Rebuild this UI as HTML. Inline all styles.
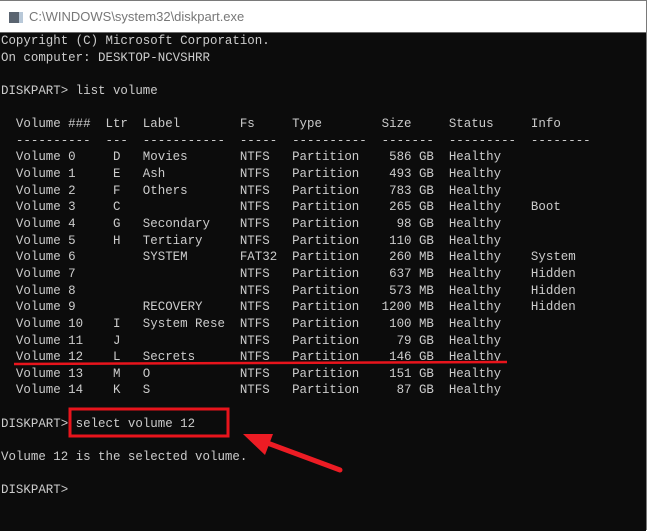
<!DOCTYPE html>
<html><head><meta charset="utf-8"><style>
html,body{margin:0;padding:0;}
body{width:648px;height:530px;position:relative;overflow:hidden;background:#fff;}
.win{position:absolute;left:0;top:0;width:647px;height:530px;border-top:1px solid #7a7a7a;border-right:1px solid #7a7a7a;box-sizing:border-box;}
.title{position:absolute;left:0;top:1px;width:646px;height:30px;background:#fff;border-bottom:1px solid #6a6a6a;}
.title span{position:absolute;left:29px;top:7px;font:13px "Liberation Sans",sans-serif;color:#777;}
.ico{position:absolute;left:9px;top:10px;width:14px;height:11px;background:#5a6470;}
.ico:after{content:"";position:absolute;right:0;top:0;width:4px;height:11px;background:#b8c8d8;}
.con{position:absolute;left:0;top:32px;width:646px;height:498px;background:#0c0c0c;}
pre{position:absolute;left:1px;top:0;margin:0;font:12.45px/16.64px "Liberation Mono",monospace;color:#cccccc;}
</style></head><body>
<div class="win"><div class="title"><div class="ico"></div><span>C:\WINDOWS\system32\diskpart.exe</span></div>
<div class="con"><pre>Copyright (C) Microsoft Corporation.
On computer: DESKTOP-NCVSHRR

DISKPART&gt; list volume

  Volume ###  Ltr  Label        Fs     Type        Size     Status     Info
  ----------  ---  -----------  -----  ----------  -------  ---------  --------
  Volume 0     D   Movies       NTFS   Partition    586 GB  Healthy
  Volume 1     E   Ash          NTFS   Partition    493 GB  Healthy
  Volume 2     F   Others       NTFS   Partition    783 GB  Healthy
  Volume 3     C                NTFS   Partition    265 GB  Healthy    Boot
  Volume 4     G   Secondary    NTFS   Partition     98 GB  Healthy
  Volume 5     H   Tertiary     NTFS   Partition    110 GB  Healthy
  Volume 6         SYSTEM       FAT32  Partition    260 MB  Healthy    System
  Volume 7                      NTFS   Partition    637 MB  Healthy    Hidden
  Volume 8                      NTFS   Partition    573 MB  Healthy    Hidden
  Volume 9         RECOVERY     NTFS   Partition   1200 MB  Healthy    Hidden
  Volume 10    I   System Rese  NTFS   Partition    100 MB  Healthy
  Volume 11    J                NTFS   Partition     79 GB  Healthy
  Volume 12    L   Secrets      NTFS   Partition    146 GB  Healthy
  Volume 13    M   O            NTFS   Partition    151 GB  Healthy
  Volume 14    K   S            NTFS   Partition     87 GB  Healthy

DISKPART&gt; select volume 12

Volume 12 is the selected volume.

DISKPART&gt;</pre></div></div>
<svg width="648" height="530" style="position:absolute;left:0;top:0">
<line x1="14" y1="364" x2="507" y2="362" stroke="#e8141c" stroke-width="2.5"/>
<rect x="70" y="409" width="158" height="27" fill="none" stroke="#e8141c" stroke-width="3"/>
<line x1="340" y1="470" x2="262" y2="441" stroke="#ed1c24" stroke-width="5" stroke-linecap="round"/>
<polygon points="243,434 273,434 265,455" fill="#ed1c24"/>
</svg>
</body></html>
